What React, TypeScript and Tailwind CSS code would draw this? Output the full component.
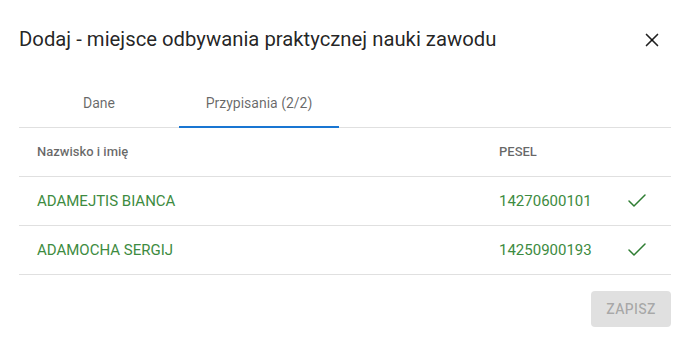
import { X, Check } from "lucide-react";

const rows = [
  { name: "ADAMEJTIS BIANCA", pesel: "14270600101" },
  { name: "ADAMOCHA SERGIJ", pesel: "14250900193" },
];

export default function App() {
  return (
    <div className="h-[340px] w-[690px] bg-white px-[19px] font-['Roboto',sans-serif]">
      <div className="flex h-[79px] items-center justify-between">
        <h2 className="text-[20.3px] font-normal text-black/[0.87]">
          Dodaj - miejsce odbywania praktycznej nauki zawodu
        </h2>
        <button type="button" className="mr-[1px] flex h-9 w-9 items-center justify-center text-black/[0.87]">
          <X size={22} strokeWidth={1.8} />
        </button>
      </div>

      <div className="flex border-b border-[#e0e0e0]">
        <div className="flex h-12 w-[160px] items-center justify-center text-[14px] text-black/60">Dane</div>
        <div className="relative flex h-12 w-[160px] items-center justify-center text-[14px] text-black/60">
          Przypisania (2/2)
          <span className="absolute bottom-[-1px] left-0 h-[2px] w-full bg-[#1976d2]" />
        </div>
      </div>

      <div className="flex h-[49px] items-center border-b border-[#e0e0e0] text-[13px] font-medium text-black/60">
        <div className="flex-1 pl-[18px]">Nazwisko i imię</div>
        <div className="w-[172px]">PESEL</div>
      </div>
      {rows.map((row) => (
        <div
          key={row.pesel}
          className="flex h-[49px] items-center border-b border-[#e0e0e0] text-[15px] text-[#3d8b41]"
        >
          <div className="flex-1 pl-[18px]">{row.name}</div>
          <div className="w-[126px]">{row.pesel}</div>
          <div className="flex w-[46px] items-center">
            <Check size={24} strokeWidth={1.5} className="text-[#2e7d32]" />
          </div>
        </div>
      ))}

      <div className="flex justify-end pt-4">
        <button
          type="button"
          disabled
          className="h-9 w-20 rounded-[4px] bg-[#e0e0e0] text-[14px] font-medium tracking-[0.02em] text-black/[0.26]"
        >
          ZAPISZ
        </button>
      </div>
    </div>
  );
}
